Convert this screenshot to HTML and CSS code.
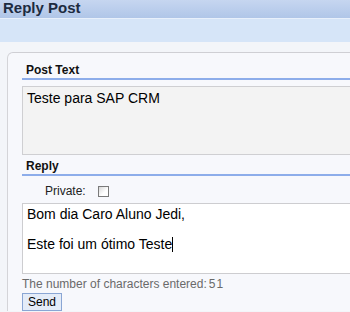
FILE: index.html
```html
<!DOCTYPE html>
<html lang="en">
<head>
  <meta charset="UTF-8" />
  <title>Reply Post</title>
  <link rel="stylesheet" href="styles.css">
</head>
<body>
  <div class="title-bar">Reply Post</div>
  <div class="toolbar"></div>
  <div class="content">
    <div class="panel">
      <div class="section-title">Post Text</div>
      <div class="post-text">Teste para SAP CRM</div>

      <div class="section-title reply-title">Reply</div>
      <div class="private-row">
        <label for="private">Private:</label>
        <input type="checkbox" id="private" />
      </div>
      <div class="reply-box">Bom dia Caro Aluno Jedi,<br><br>Este foi um ótimo Teste<span class="caret"></span></div>
      <div class="counter">The number of characters entered:<span class="count">51</span></div>
      <button class="send">Send</button>
    </div>
  </div>
</body>
</html>
```

FILE: styles.css
```css
body {
  margin: 0;
  font-family: "Liberation Sans", Arial, sans-serif;
  background: #f3f5f9;
  color: #000;
  overflow: hidden;
}
.title-bar {
  height: 18px;
  line-height: 15px;
  padding-left: 3px;
  font-size: 15px;
  font-weight: bold;
  color: #1d2b3f;
  background: linear-gradient(#c6d6f0, #b0c6e8);
  border-bottom: 1px solid #e8f0fb;
  overflow: hidden;
}
.toolbar {
  height: 23px;
  background: #d6e5f8;
}
.content {
  padding: 10px 0 0 7px;
}
.panel {
  background: #f7f8fc;
  border-left: 1px solid #d4d4d8;
  border-top: 1px solid #cfcfd4;
  border-top-left-radius: 6px;
  padding: 10px 0 0 14px;
}
.section-title {
  font-size: 12px;
  font-weight: bold;
  color: #111;
  padding-left: 4px;
  height: 15px;
  border-bottom: 2px solid #8dadea;
}
.reply-title {
  margin-top: 4px;
}
.post-text {
  margin-top: 6px;
  height: 61px;
  background: #f3f3f3;
  border: 1px solid #cfcfd2;
  border-right: none;
  padding: 3px 4px;
  font-size: 14px;
}
.private-row {
  display: flex;
  align-items: center;
  gap: 12px;
  padding: 8px 0 0 23px;
  height: 14px;
  font-size: 12px;
  color: #222;
}
.private-row input {
  margin: 0;
  width: 11px;
  height: 11px;
  appearance: none;
  border: 1px solid #7a7a7a;
  background: linear-gradient(135deg, #d8d8d8, #fff 60%);
}
.reply-box {
  margin-top: 5px;
  height: 63px;
  background: #fff;
  border: 1px solid #cdcdd0;
  border-right: none;
  padding: 3px 4px;
  font-size: 14px;
  line-height: 15px;
}
.caret {
  display: inline-block;
  width: 1px;
  height: 15px;
  background: #000;
  vertical-align: -3px;
}
.counter {
  margin-top: 3px;
  font-size: 12px;
  line-height: 14px;
  color: #6a6a6a;
}
.count {
  margin-left: 2px;
  letter-spacing: 1px;
}
.send {
  display: block;
  margin-top: 2px;
  font-family: "Liberation Sans", Arial, sans-serif;
  font-size: 12px;
  line-height: 14px;
  padding: 1px 5px;
  background: #e4ecf8;
  border: 1px solid #8aa6d4;
  border-radius: 0;
  color: #000;
}
```
